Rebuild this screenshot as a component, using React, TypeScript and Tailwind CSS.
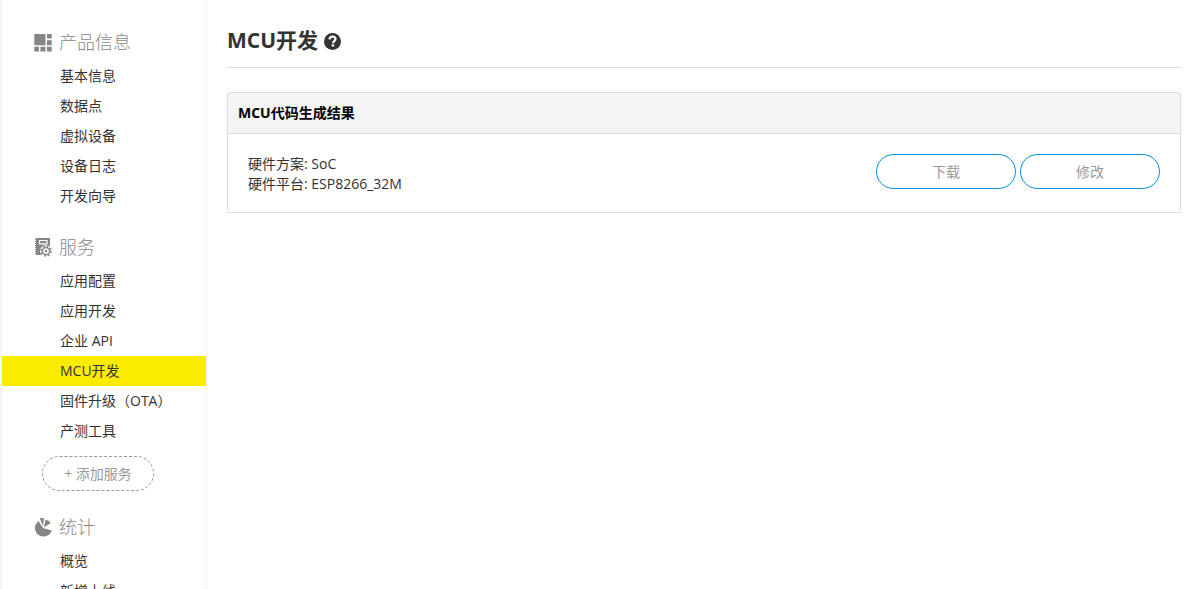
import type { ReactNode } from "react";

type Group = {
  title: string;
  icon: ReactNode;
  items: string[];
  addable?: boolean;
};

const BlocksIcon = () => (
  <svg width="18" height="20" viewBox="0 -2 18 20" fill="#858585" aria-hidden="true">
    <path d="M.3 0h11.2v11.3H.3zM13 0h4.7v4.5H13zM13 6.3h4.7v5H13zM.3 12.8h4.7v4.6H.3zM6.5 12.8h5v4.6h-5zM13 12.8h4.7v4.6H13z" />
  </svg>
);

const ServiceIcon = () => (
  <svg width="18" height="20" viewBox="0 0 18 20" aria-hidden="true">
    <path fill="#858585" d="M2 1h14v17H2z" />
    <path stroke="#858585" strokeWidth="1" d="M1.5 2v16" strokeDasharray="1 1" />
    <path fill="none" stroke="#fff" strokeWidth="1.2" d="M5.5 3.5h7.5v3.4h-7.5z" />
    <circle cx="12" cy="14" r="6" fill="#fff" />
    <circle cx="12" cy="14" r="3.6" fill="none" stroke="#858585" strokeWidth="1.5" />
    <circle cx="12" cy="14" r="5" fill="none" stroke="#858585" strokeWidth="1.6" strokeDasharray="1.9 2.03" />
    <circle cx="12" cy="14" r="1.3" fill="#858585" />
  </svg>
);

const StatsIcon = () => (
  <svg width="18" height="20" viewBox="0 0 18 20" fill="#858585" aria-hidden="true">
    <path d="M9 11 4.5 4A8.6 8.6 0 1 0 17.8 13.5z" />
    <path d="M5.8 1.2A9 9 0 0 1 10 1.2L9 9z" />
    <path d="M11.5 2.8Q14.8 3.3 16.8 6L10 10.3z" />
  </svg>
);

const groups: Group[] = [
  {
    title: "产品信息",
    icon: <BlocksIcon />,
    items: ["基本信息", "数据点", "虚拟设备", "设备日志", "开发向导"],
  },
  {
    title: "服务",
    icon: <ServiceIcon />,
    items: ["应用配置", "应用开发", "企业 API", "MCU开发", "固件升级（OTA）", "产测工具"],
    addable: true,
  },
  {
    title: "统计",
    icon: <StatsIcon />,
    items: ["概览", "新增上线"],
  },
];

const active = "MCU开发";

function Sidebar() {
  return (
    <nav className="flex w-[207px] shrink-0 flex-col gap-[17px] overflow-hidden border-r border-l-2 border-r-[#f2f2f2] border-l-[#f5f5f5] pt-[23px]">
      {groups.map((group) => (
        <section key={group.title} className="shrink-0">
          <h2 className="flex h-[38px] items-center gap-[7px] pl-8 text-[18px] font-light text-[#888]">
            {group.icon}
            {group.title}
          </h2>
          <ul>
            {group.items.map((item) => (
              <li key={item}>
                <a
                  href="#"
                  className={`block h-[30px] pl-[58px] text-sm leading-[30px] text-[#333] ${item === active ? "bg-[#faeb00]" : "hover:bg-gray-50"}`}
                >
                  {item}
                </a>
              </li>
            ))}
          </ul>
          {group.addable && (
            <button
              type="button"
              className="mt-[10px] ml-10 block h-[35px] w-28 rounded-full border border-dashed border-[#999] text-sm text-[#999]"
            >
              + 添加服务
            </button>
          )}
        </section>
      ))}
    </nav>
  );
}

export default function App() {
  const buttonClass = "h-[35px] w-[140px] rounded-full border border-[#0090e0] text-sm text-[#999]";

  return (
    <div className="flex h-screen overflow-hidden bg-white font-['Open_Sans','Noto_Sans_CJK_SC',sans-serif] text-[#333]">
      <Sidebar />
      <main className="min-w-0 flex-1 pt-[14px] pr-[9px] pl-5">
        <div className="flex h-[54px] items-center gap-[6px] border-b border-[#ddd]">
          <h1 className="text-[21px] font-bold">MCU开发</h1>
          <button type="button" aria-label="帮助">
            <svg width="17" height="18" viewBox="0 -1 17 18" aria-hidden="true">
              <circle cx="8.5" cy="8.5" r="8.5" fill="#333" />
              <path d="M5.5 6.3C5.7 4.4 6.9 3.7 8.5 3.7c1.8 0 3 .9 3 2.4 0 2-2.5 2-2.5 4.1" fill="none" stroke="#fff" strokeWidth="2.2" />
              <path d="M7.7 11.3h2.5v2.2H7.7z" fill="#fff" />
            </svg>
          </button>
        </div>

        <section className="mt-6 rounded-xs border border-[#ddd]">
          <h2 className="h-[41px] border-b border-[#ddd] bg-[#f4f4f4] px-[10px] text-sm leading-10 font-bold text-black">
            MCU代码生成结果
          </h2>
          <div className="flex items-start justify-between px-5 pt-5 pb-[18px]">
            <div className="text-sm leading-5">
              <p>硬件方案: SoC</p>
              <p>硬件平台: ESP8266_32M</p>
            </div>
            <div className="flex gap-1">
              <button type="button" className={buttonClass}>下载</button>
              <button type="button" className={buttonClass}>修改</button>
            </div>
          </div>
        </section>
      </main>
    </div>
  );
}
